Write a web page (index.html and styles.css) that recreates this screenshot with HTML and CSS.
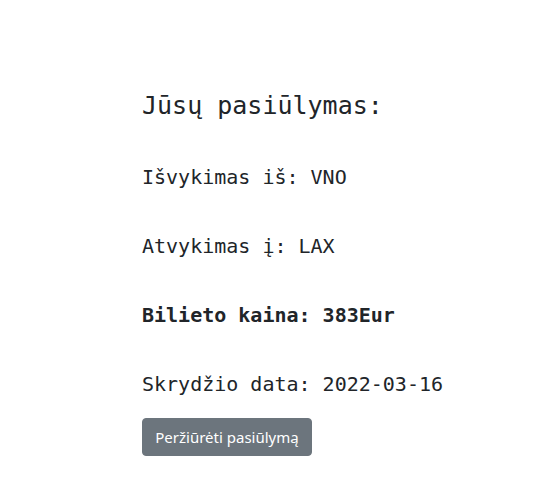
FILE: index.html
```html
<!DOCTYPE html>
<html lang="lt">
<head>
<meta charset="utf-8">
<link rel="stylesheet" href="styles.css">
</head>
<body>
<main class="offer">
  <h4 class="title">Jūsų pasiūlymas:</h4>
  <p class="line">Išvykimas iš: VNO</p>
  <p class="line">Atvykimas į: LAX</p>
  <p class="line price">Bilieto kaina: 383Eur</p>
  <p class="line">Skrydžio data: 2022-03-16</p>
  <button class="btn">Peržiūrėti pasiūlymą</button>
</main>
</body>
</html>
```
FILE: styles.css
```css
html, body {
  margin: 0;
  padding: 0;
  background: #fff;
}
.offer {
  display: flex;
  flex-direction: column;
  align-items: flex-start;
  padding: 92px 0 0 142px;
  font-family: "DejaVu Sans Mono", monospace;
  color: #212529;
}
.title {
  margin: 0;
  font-size: 25px;
  font-weight: 400;
  line-height: 28px;
}
.line {
  margin: 45px 0 0;
  font-size: 20px;
  line-height: 24px;
}
.price {
  font-weight: 700;
}
.btn {
  margin-top: 22px;
  font-family: "Noto Sans", sans-serif;
  font-size: 15px;
  line-height: 24px;
  color: #fff;
  background: #6c757d;
  border: 1px solid #6c757d;
  border-radius: 4px;
  padding: 6px 12px;
  width: 170px;
  height: 38px;
}
```
